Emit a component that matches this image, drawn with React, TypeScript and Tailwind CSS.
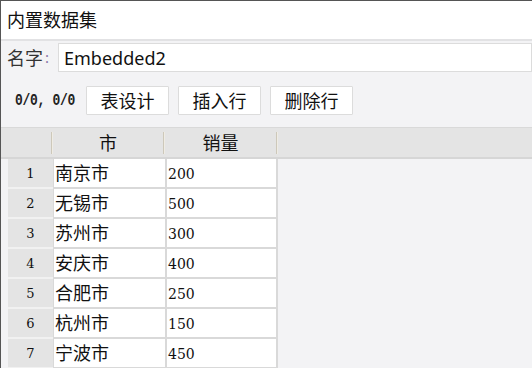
import React from "react";

const rows = [
  { city: "南京市", sales: "200" },
  { city: "无锡市", sales: "500" },
  { city: "苏州市", sales: "300" },
  { city: "安庆市", sales: "400" },
  { city: "合肥市", sales: "250" },
  { city: "杭州市", sales: "150" },
  { city: "宁波市", sales: "450" },
];

const cjk = "font-['Noto_Sans','Noto_Sans_CJK_SC',sans-serif]";
const serifNum = "font-['DejaVu_Serif',serif]";

function HeaderSep() {
  return <div className="h-[22px] w-[2px] shrink-0 border-l border-[#cdc8ba] bg-[#efece4]" />;
}

export default function App() {
  return (
    <div className={`h-[368px] w-[532px] overflow-hidden border-l border-t border-[#555] bg-[#f3f3f5] ${cjk}`}>
      {/* Title */}
      <div className="flex h-[38px] items-center bg-white pl-[6px] text-[18px] leading-none text-[#111]">
        内置数据集
      </div>
      <div className="h-[2px] bg-[#e2e2e4]" />

      {/* Name row */}
      <div className="flex items-center pt-[2px]">
        <span className="ml-[6px] text-[18px] leading-none text-[#333]">名字</span>
        <span className="ml-[2px] text-[15px] leading-none text-[#8a76a8]">:</span>
        <div className="ml-[9px] flex h-[29px] flex-1 items-center border border-[#dcdcdc] bg-white pl-[5px] text-[18px] leading-none text-[#111]">
          Embedded2
        </div>
      </div>

      {/* Toolbar */}
      <div className="mt-[14px] flex items-center">
        <span className="ml-[14px] inline-block w-[62px] scale-y-[1.3] font-['Liberation_Mono',monospace] text-[13px] font-bold leading-none tracking-[-0.3px] text-[#222]">
          0/0, 0/0
        </span>
        <div className="ml-[9px] flex gap-[9px]">
          {["表设计", "插入行", "删除行"].map((t) => (
            <button
              key={t}
              className="flex h-[29px] w-[83px] items-center justify-center rounded-[1px] border border-[#dcdcdc] bg-white text-[18px] leading-none text-[#111]"
            >
              {t}
            </button>
          ))}
        </div>
      </div>

      {/* Table */}
      <div className="mt-[12px] border-t border-[#d9d9d9]">
        <div className="flex h-[31px] items-center border-b-2 border-[#d6d6d6] bg-[#e4e4e4] pl-[7px] text-[18px] leading-none text-[#111]">
          <div className="w-[43px]" />
          <HeaderSep />
          <div className="w-[110px] text-center">市</div>
          <HeaderSep />
          <div className="w-[111px] text-center">销量</div>
          <HeaderSep />
          <div className="flex-1" />
        </div>
        <div className="pl-[7px]">
          {rows.map((r, i) => (
            <div key={i} className="flex h-[30px]">
              <div
                className={`flex w-[45px] items-center justify-center border-b-2 border-[#f1f1f1] bg-[#e4e4e4] pt-[2px] text-[13px] text-[#111] ${serifNum}`}
              >
                {i + 1}
              </div>
              <div className="flex w-[112px] items-center border-b-2 border-l border-[#d9d9d9] bg-white pl-[1px] text-[18px] leading-none text-[#111]">
                {r.city}
              </div>
              <div
                className={`flex w-[113px] items-center border-x-2 border-b-2 border-[#d9d9d9] bg-white pl-[1px] pt-[2px] text-[14px] text-[#111] ${serifNum}`}
              >
                {r.sales}
              </div>
            </div>
          ))}
        </div>
      </div>
    </div>
  );
}
